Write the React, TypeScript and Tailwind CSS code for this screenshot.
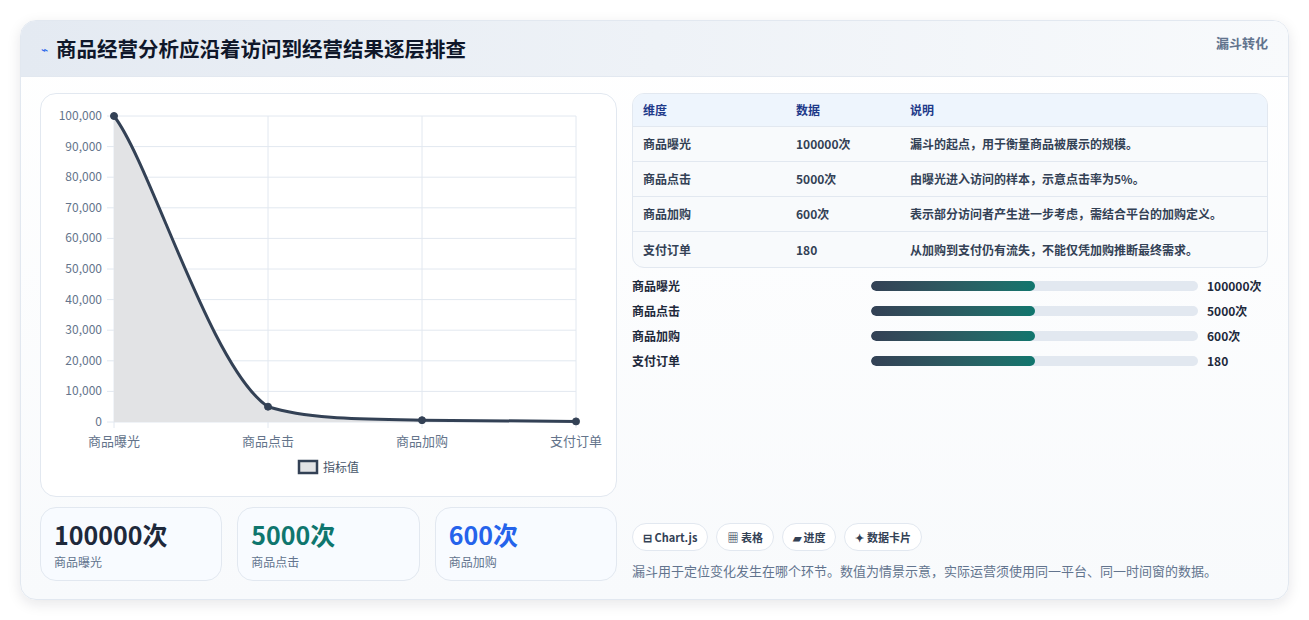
import React from "react";

const rows = [
  ["商品曝光", "100000次", "漏斗的起点，用于衡量商品被展示的规模。"],
  ["商品点击", "5000次", "由曝光进入访问的样本，示意点击率为5%。"],
  ["商品加购", "600次", "表示部分访问者产生进一步考虑，需结合平台的加购定义。"],
  ["支付订单", "180", "从加购到支付仍有流失，不能仅凭加购推断最终需求。"],
];

function Chart() {
  // plot area: x 73..535, y 22..328 (relative to card)
  const xs = [73, 227, 381, 535];
  const ys = [22, 312.7, 326.2, 327.4];
  const yTicks = Array.from({ length: 11 }, (_, i) => i);
  const line = `M73,22 C110,70 170,275 227,312.7 C270,326 330,325 381,326.2 C440,327 490,327.3 535,327.4`;
  return (
    <svg width="574" height="401" className="block">
      {yTicks.map((i) => {
        const y = 328 - i * 30.6;
        return (
          <g key={i}>
            <line x1="66" x2="535" y1={y} y2={y} stroke="#e2e8f0" />
            <text x="61" y={y + 4} textAnchor="end" fontSize="12" fill="#64748b">
              {(i * 10000).toLocaleString("en-US")}
            </text>
          </g>
        );
      })}
      {xs.map((x) => (
        <line key={x} x1={x} x2={x} y1="22" y2="334" stroke="#e2e8f0" />
      ))}
      <path d={`${line} L535,328 L73,328 Z`} fill="#e2e3e5" />
      <path d={line} fill="none" stroke="#334155" strokeWidth="3" />
      {xs.map((x, i) => (
        <circle key={x} cx={x} cy={ys[i]} r="3.5" fill="#334155" stroke="#334155" strokeWidth="1" />
      ))}
      {["商品曝光", "商品点击", "商品加购", "支付订单"].map((t, i) => (
        <text key={t} x={xs[i]} y="352" textAnchor="middle" fontSize="13" fill="#64748b">
          {t}
        </text>
      ))}
      <rect x="258" y="367" width="18" height="12" fill="#e2e3e5" stroke="#334155" strokeWidth="2.5" />
      <text x="282" y="378" fontSize="12" fill="#475569">指标值</text>
    </svg>
  );
}

export default function App() {
  return (
    <div className="w-[1309px] h-[620px] bg-white p-5 pb-0" style={{ fontFamily: '"Noto Sans CJK SC", "Noto Sans", sans-serif' }}>
      <div className="h-[580px] rounded-2xl border border-slate-200 bg-gradient-to-b from-white to-[#f8fafc] shadow-[0_4px_14px_rgba(15,23,42,0.10)] overflow-hidden">
        <div className="h-[56px] flex items-center justify-between px-5 border-b border-slate-200 bg-gradient-to-r from-[#e4eaf2] to-[#f8fafc]">
          <div className="flex items-center gap-2">
            <span className="text-[#2563eb] text-xs">⌁</span>
            <h1 className="text-[20.5px] font-bold text-[#0f172a]">商品经营分析应沿着访问到经营结果逐层排查</h1>
          </div>
          <span className="self-start mt-3 text-[13px] font-semibold text-slate-500">漏斗转化</span>
        </div>
        <div className="flex gap-[15px] pl-[19px] pr-5 pt-4">
          <div className="w-[577px] flex flex-col gap-[10px]">
            <div className="h-[404px] rounded-2xl border border-slate-200 bg-white">
              <Chart />
            </div>
            <div className="grid grid-cols-3 gap-[15px]">
              {[
                ["100000次", "text-[#1e293b]", "商品曝光"],
                ["5000次", "text-[#0f766e]", "商品点击"],
                ["600次", "text-[#2563eb]", "商品加购"],
              ].map(([v, c, l]) => (
                <div key={l} className="h-[74px] rounded-2xl border border-slate-200 bg-[#f8fbff] px-[13px] pt-[9px]">
                  <div className={`text-[25px] leading-[34px] font-bold ${c}`}>{v}</div>
                  <div className="text-[12px] text-slate-500 mt-[2px]">{l}</div>
                </div>
              ))}
            </div>
          </div>
          <div className="flex-1 flex flex-col">
            <div className="rounded-xl border border-slate-200 overflow-hidden bg-[#f8fafc]">
              <div className="h-[33px] flex items-center bg-[#eef5fd] border-b border-slate-200 text-[12px] font-semibold text-[#1e3a8a] px-[10px]">
                <span className="w-[153px]">维度</span>
                <span className="w-[114px]">数据</span>
                <span>说明</span>
              </div>
              {rows.map((r, i) => (
                <div key={r[0]} className={`h-[35px] flex items-center px-[10px] text-[12px] font-semibold text-[#334155] ${i < 3 ? "border-b border-slate-200" : ""}`}>
                  <span className="w-[153px]">{r[0]}</span>
                  <span className="w-[114px]">{r[1]}</span>
                  <span>{r[2]}</span>
                </div>
              ))}
            </div>
            <div className="flex flex-col gap-[10px] mt-[10px]">
              {rows.map((r) => (
                <div key={r[0]} className="h-[15px] flex items-center text-[12px] font-semibold text-[#1e293b]">
                  <span className="w-[239px]">{r[0]}</span>
                  <div className="w-[327px] h-[10px] rounded-full bg-[#e2e8f0] overflow-hidden">
                    <div className="w-1/2 h-full rounded-full bg-gradient-to-r from-[#334155] to-[#0f766e]" />
                  </div>
                  <span className="ml-[9px]">{r[1]}</span>
                </div>
              ))}
            </div>
            <div className="flex gap-[8px] mt-[155px]">
              {["⊟ Chart.js", "▦ 表格", "▰ 进度", "✦ 数据卡片"].map((t) => (
                <span key={t} className="h-[28px] px-[10px] flex items-center rounded-full border border-slate-200 bg-white text-[11px] font-semibold text-[#334155]">
                  {t}
                </span>
              ))}
            </div>
            <p className="mt-[10px] text-[13px] text-slate-500">
              漏斗用于定位变化发生在哪个环节。数值为情景示意，实际运营须使用同一平台、同一时间窗的数据。
            </p>
          </div>
        </div>
      </div>
    </div>
  );
}
